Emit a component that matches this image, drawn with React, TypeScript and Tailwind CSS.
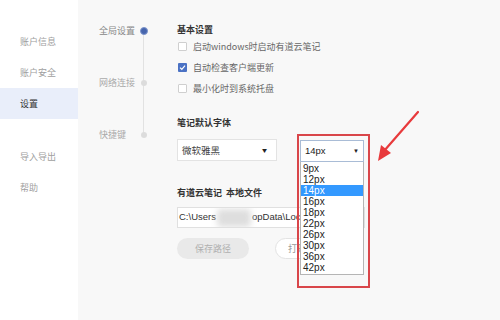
import React from "react";

const cjk = { fontFamily: '"Noto Sans CJK SC", "Noto Sans", sans-serif' };
const latin = { fontFamily: '"Liberation Sans", Arial, sans-serif' };

function Check({ checked, label }: { checked?: boolean; label: string }) {
  return (
    <div className="flex items-center h-[21px] gap-[6px]">
      {checked ? (
        <div className="w-[9px] h-[9px] bg-[#4b72c4] rounded-[1px] flex items-center justify-center">
          <svg width="7" height="7" viewBox="0 0 7 7">
            <path d="M1 3.6 L2.8 5.3 L6 1.6" stroke="white" strokeWidth="1.2" fill="none" />
          </svg>
        </div>
      ) : (
        <div className="w-[9px] h-[9px] border border-[#cfcfcf] bg-white rounded-[1px]" />
      )}
      <span className="text-[9px] text-[#666]">{label}</span>
    </div>
  );
}

export default function App() {
  const sizes = ["9px", "12px", "14px", "16px", "18px", "22px", "26px", "30px", "36px", "42px"];
  return (
    <div className="relative w-[500px] h-[320px] overflow-hidden flex bg-[#f8f8f8]" style={cjk}>
      {/* sidebar */}
      <div className="w-[78px] h-full bg-white flex flex-col pt-[26px] text-[9px] text-[#a0a0a0]">
        <div className="h-[31px] flex items-center pl-[20px]">账户信息</div>
        <div className="h-[31px] flex items-center pl-[20px]">账户安全</div>
        <div className="h-[31px] flex items-center pl-[20px] bg-[#e9eefa] text-[#333]">设置</div>
        <div className="h-[22px]" />
        <div className="h-[31px] flex items-center pl-[20px]">导入导出</div>
        <div className="h-[31px] flex items-center pl-[20px]">帮助</div>
      </div>

      {/* middle nav */}
      <div className="w-[99px] pt-[24px] pl-[21px]">
        <div className="relative flex flex-col">
          <div className="absolute left-[43.5px] top-[7px] w-px h-[104px] bg-[#e2e2e2]" />
          <div className="h-[52px] flex items-start">
            <span className="text-[9px] text-[#888] w-[40px] leading-[13px]">全局设置</span>
            <span className="relative mt-[2.5px] ml-[1px] w-[8px] h-[8px] rounded-full bg-[#4665ad] border border-[#7d95cc]" />
          </div>
          <div className="h-[52px] flex items-start">
            <span className="text-[9px] text-[#aaa] w-[41px] leading-[13px]">网络连接</span>
            <span className="relative mt-[3.5px] ml-[0.5px] w-[6px] h-[6px] rounded-full bg-[#dcdcdc]" />
          </div>
          <div className="h-[20px] flex items-start">
            <span className="text-[9px] text-[#aaa] w-[41px] leading-[13px]">快捷键</span>
            <span className="relative mt-[3.5px] ml-[0.5px] w-[6px] h-[6px] rounded-full bg-[#dcdcdc]" />
          </div>
        </div>
      </div>

      {/* content */}
      <div className="flex-1 pt-[23px]">
        <div className="text-[9px] font-bold text-[#333] h-[14px] leading-[14px]">基本设置</div>
        <div className="pl-[1px] mt-[-1px]">
          <Check label="启动windows时启动有道云笔记" />
          <Check checked label="自动检查客户端更新" />
          <Check label="最小化时到系统托盘" />
        </div>
        <div className="mt-[17px] text-[9px] font-bold text-[#333] h-[14px] leading-[14px]">笔记默认字体</div>
        <div className="mt-[9px] flex gap-[22px]">
          <div className="w-[100px] h-[22px] border border-[#e3e3e3] bg-white flex items-center justify-between px-[4px] text-[9.5px] text-[#444]">
            <span>微软雅黑</span>
            <span className="text-[5px] text-[#222] pr-[5px]">▼</span>
          </div>
        </div>
        <div className="mt-[25px] text-[9px] font-bold text-[#333] h-[14px] leading-[14px]">有道云笔记&nbsp;&nbsp;本地文件</div>
        <div className="mt-[7px] w-[188px] h-[21px] border border-[#e0e0e0] bg-white flex items-center pl-[1px] text-[9.5px] text-[#333] overflow-hidden whitespace-nowrap" style={latin}>
          <span>C:\Users</span>
          <span className="w-[34px] h-[18px] mx-[1px] bg-[#dedede] blur-[3px] rounded" />
          <span>opData\Local</span>
        </div>
        <div className="mt-[10px] flex gap-[26px]">
          <div className="w-[72px] h-[21px] rounded-full bg-[#e9e9e9] flex items-center justify-center text-[9px] text-[#b0b0b0]">保存路径</div>
          <div className="w-[72px] h-[21px] rounded-full bg-white border border-[#e3e3e3] flex items-center pl-[12px] text-[9px] text-[#999]">打开目录</div>
        </div>
      </div>

      {/* open native dropdown overlay */}
      <div className="absolute left-[300px] top-[140px] w-[64px] flex flex-col" style={latin}>
        <div className="h-[22px] bg-white border border-[#a9bcd6] flex items-center justify-between pl-[4px] pr-[4px] text-[9.5px] text-[#222]">
          <span>14px</span>
          <span className="text-[6px]">▼</span>
        </div>
        <div className="bg-white border border-[#b5b5b5] border-t-0 pt-[1px] pb-[1px]">
          {sizes.map((s) => (
            <div
              key={s}
              className={
                s === "14px"
                  ? "h-[11px] leading-[11px] pl-[2px] text-[10px] bg-[#3399ff] text-white"
                  : "h-[11px] leading-[11px] pl-[2px] text-[10px] text-[#222]"
              }
            >
              {s}
            </div>
          ))}
        </div>
      </div>

      {/* red annotation box */}
      <div className="absolute left-[297px] top-[134px] w-[73px] h-[154px] border-2 border-[#d9464a]" />

      {/* red arrow */}
      <svg className="absolute left-[370px] top-[105px]" width="60" height="65" viewBox="0 0 60 65">
        <path d="M48 7 L14 46" stroke="#e83a3c" strokeWidth="2.2" strokeLinecap="round" />
        <path d="M8 56 L11 40 L21 48 Z" fill="#e83a3c" />
      </svg>
    </div>
  );
}
